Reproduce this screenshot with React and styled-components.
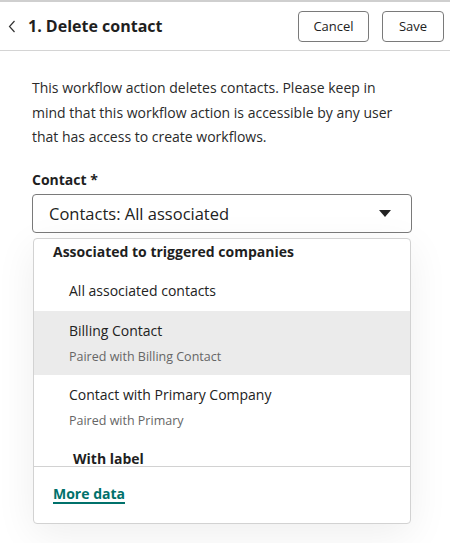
import React from 'react'
import styled, { createGlobalStyle } from 'styled-components'

const GlobalStyle = createGlobalStyle`
  html, body {
    margin: 0;
    padding: 0;
    background: #fff;
  }
  body {
    font-family: "Open Sans", "Lato", sans-serif;
    color: #222;
  }
  * {
    box-sizing: border-box;
  }
`

const Page = styled.div`
  width: 450px;
  height: 543px;
  overflow: hidden;
  border-top: 2px solid #cfcfcf;
`

const Header = styled.div`
  height: 49px;
  display: flex;
  align-items: center;
  padding: 0 6px 0 8px;
  border-bottom: 1px solid #d4d4d4;
`

const BackButton = styled.button`
  border: none;
  background: none;
  padding: 0;
  width: 12px;
  height: 20px;
  display: flex;
  align-items: center;
  color: #333;
  cursor: pointer;
`

const Title = styled.h1`
  flex: 1;
  margin: 0 0 0 8px;
  font-size: 16px;
  font-weight: 700;
  color: #1f1f1f;
`

const Actions = styled.div`
  display: flex;
  gap: 13px;
`

const Button = styled.button`
  height: 31px;
  width: ${p => p.$width}px;
  padding: 0;
  border: 1px solid #7a7a7a;
  border-radius: 4px;
  background: #fff;
  font-family: inherit;
  font-size: 13px;
  color: #222;
`

const Body = styled.div`
  padding: 25px 38px 0 32px;
`

const Description = styled.p`
  margin: 0;
  font-size: 14px;
  line-height: 24.5px;
  color: #2a2a2a;
`

const Label = styled.div`
  margin-top: 20px;
  font-size: 14px;
  font-weight: 700;
  color: #1f1f1f;
`

const Select = styled.div`
  margin-top: 5px;
  height: 39px;
  border: 1px solid #7a7a7a;
  border-radius: 4px;
  display: flex;
  align-items: center;
  justify-content: space-between;
  padding: 0 20px 0 16px;
  font-size: 16.5px;
  color: #222;
`

const Menu = styled.div`
  margin: 5px 1px 0 1px;
  height: 286px;
  border: 1px solid #d2d2d2;
  border-radius: 4px;
  background: #fff;
  box-shadow: 0 10px 40px rgba(0, 0, 0, 0.07);
  display: flex;
  flex-direction: column;
  overflow: hidden;
`

const List = styled.div`
  height: 228px;
  flex-shrink: 0;
  overflow: hidden;
  border-bottom: 1px solid #d2d2d2;
`

const GroupTitle = styled.div`
  padding: ${p => p.$top}px 0 0 ${p => p.$indent || 19}px;
  height: ${p => p.$height || 28}px;
  font-size: 14px;
  line-height: 18px;
  font-weight: 700;
  color: #1f1f1f;
`

const Option = styled.div`
  padding: 11px 16px 0 35px;
  height: ${p => p.$height}px;
  background: ${p => (p.$active ? '#ebebeb' : 'transparent')};
`

const OptionText = styled.div`
  font-size: 14px;
  line-height: 18px;
  color: #222;
`

const OptionSub = styled.div`
  margin-top: 9px;
  font-size: 12.5px;
  line-height: 16px;
  color: #666;
`

const Footer = styled.div`
  flex: 1;
  display: flex;
  align-items: center;
  padding: 0 19px 2px;
`

const MoreLink = styled.a`
  font-size: 14px;
  font-weight: 700;
  color: #00716b;
  text-decoration: underline;
  text-underline-offset: 3px;
  text-decoration-thickness: 1.5px;
`

export default function App() {
  return (
    <>
      <GlobalStyle />
      <Page>
        <Header>
          <BackButton aria-label="Back">
            <svg width="8" height="13" viewBox="0 0 8 13" fill="none">
              <path d="M6.5 1 1.5 6.5 6.5 12" stroke="#333" strokeWidth="1.2" />
            </svg>
          </BackButton>
          <Title>1. Delete contact</Title>
          <Actions>
            <Button $width={71}>Cancel</Button>
            <Button $width={62}>Save</Button>
          </Actions>
        </Header>
        <Body>
          <Description>
            This workflow action deletes contacts. Please keep in mind that this
            workflow action is accessible by any user that has access to create
            workflows.
          </Description>
          <Label>Contact *</Label>
          <Select>
            <span>Contacts: All associated</span>
            <svg width="12" height="7" viewBox="0 0 12 7">
              <path d="M0 0h12L6 7z" fill="#222" />
            </svg>
          </Select>
          <Menu>
            <List>
              <GroupTitle $top={4} $height={32}>Associated to triggered companies</GroupTitle>
              <Option $height={40}>
                <OptionText>All associated contacts</OptionText>
              </Option>
              <Option $height={64} $active>
                <OptionText>Billing Contact</OptionText>
                <OptionSub>Paired with Billing Contact</OptionSub>
              </Option>
              <Option $height={64}>
                <OptionText>Contact with Primary Company</OptionText>
                <OptionSub>Paired with Primary</OptionSub>
              </Option>
              <GroupTitle $top={11} $indent={39}>With label</GroupTitle>
            </List>
            <Footer>
              <MoreLink href="#">More data</MoreLink>
            </Footer>
          </Menu>
        </Body>
      </Page>
    </>
  )
}
